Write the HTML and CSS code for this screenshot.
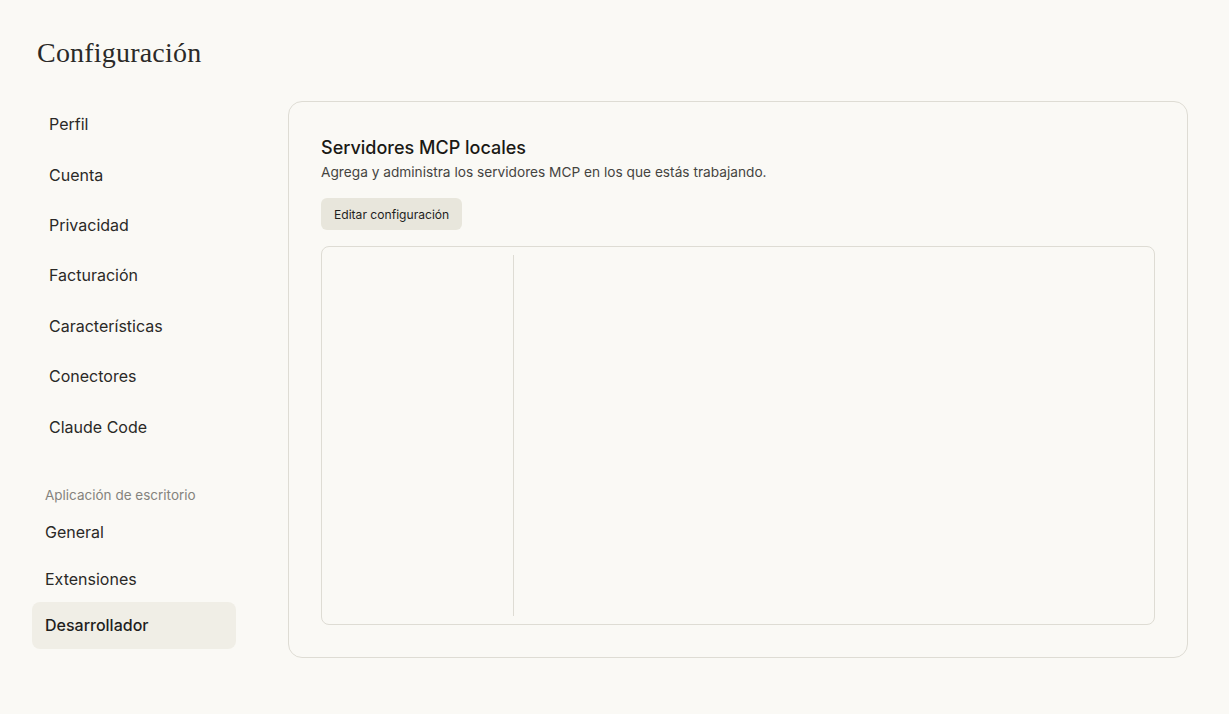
FILE: index.html
```html
<!DOCTYPE html>
<html lang="es">
<head>
<meta charset="utf-8">
<title>Configuración</title>
<link rel="stylesheet" href="styles.css">
</head>
<body>
<div class="page">
  <h1 class="page-title">Configuración</h1>
  <div class="layout">
    <nav class="sidebar">
      <ul class="nav-list">
        <li class="nav-item">Perfil</li>
        <li class="nav-item">Cuenta</li>
        <li class="nav-item">Privacidad</li>
        <li class="nav-item">Facturación</li>
        <li class="nav-item">Características</li>
        <li class="nav-item">Conectores</li>
        <li class="nav-item">Claude Code</li>
      </ul>
      <div class="nav-group-label">Aplicación de escritorio</div>
      <ul class="nav-list nav-list-desktop">
        <li class="nav-item-d">General</li>
        <li class="nav-item-d">Extensiones</li>
        <li class="nav-item-d active">Desarrollador</li>
      </ul>
    </nav>
    <main class="card">
      <h2 class="card-title">Servidores MCP locales</h2>
      <p class="card-desc">Agrega y administra los servidores MCP en los que estás trabajando.</p>
      <button class="btn">Editar configuración</button>
      <div class="server-panel">
        <div class="server-list"></div>
        <div class="server-detail"></div>
      </div>
    </main>
  </div>
</div>
</body>
</html>
```
FILE: styles.css
```css
* { box-sizing: border-box; }
html, body { margin: 0; padding: 0; }
body {
  background: #faf9f5;
  color: #1f1e1d;
  font-family: Inter, "Noto Sans", sans-serif;
}
.page {
  padding: 36px 41px 0 32px;
}
.page-title {
  margin: 0 0 0 5px;
  font-family: "Liberation Serif", "DejaVu Serif", serif;
  font-weight: 400;
  font-size: 28px;
  line-height: 34px;
  color: #2b2a28;
  letter-spacing: 0.2px;
}
.layout {
  display: flex;
  gap: 52px;
  margin-top: 31px;
}
.sidebar {
  width: 204px;
  flex: none;
}
.nav-list {
  list-style: none;
  margin: 0;
  padding: 0;
}
.nav-item {
  height: 50.4px;
  display: flex;
  align-items: center;
  padding-left: 17px;
  font-size: 16px;
  color: #2a2927;
}
.nav-list:first-child { margin-top: -2px; }
.nav-group-label {
  margin-top: 33px;
  padding-left: 13px;
  font-size: 13.5px;
  color: #85837d;
  line-height: 20px;
}
.nav-list-desktop { margin-top: 4.5px; }
.nav-item-d {
  height: 46.5px;
  display: flex;
  align-items: center;
  padding-left: 13px;
  font-size: 16px;
  color: #2a2927;
  border-radius: 8px;
}
.nav-item-d.active {
  background: #f0eee6;
  font-weight: 500;
  color: #1f1e1d;
}
.card {
  flex: 1;
  height: 557px;
  border: 1px solid #dedcd4;
  border-radius: 14px;
  padding: 33px 32px 32px 32px;
  display: flex;
  flex-direction: column;
}
.card-title {
  margin: 0;
  font-size: 18px;
  font-weight: 500;
  line-height: 26px;
  color: #1a1915;
}
.card-desc {
  margin: 0;
  font-size: 13.7px;
  line-height: 22px;
  color: #45443f;
}
.btn {
  align-self: flex-start;
  margin-top: 15px;
  height: 32px;
  padding: 0 13px;
  border: none;
  border-radius: 6px;
  background: #e8e6dc;
  font-family: Inter, "Noto Sans", sans-serif;
  font-size: 12.1px;
  color: #1f1e1d;
}
.server-panel {
  margin-top: 16px;
  flex: 1;
  border: 1px solid #dedcd4;
  border-radius: 8px;
  display: flex;
  padding: 8px 0;
}
.server-list {
  width: 192px;
  border-right: 1px solid #dedcd4;
}
.server-detail { flex: 1; }
```
